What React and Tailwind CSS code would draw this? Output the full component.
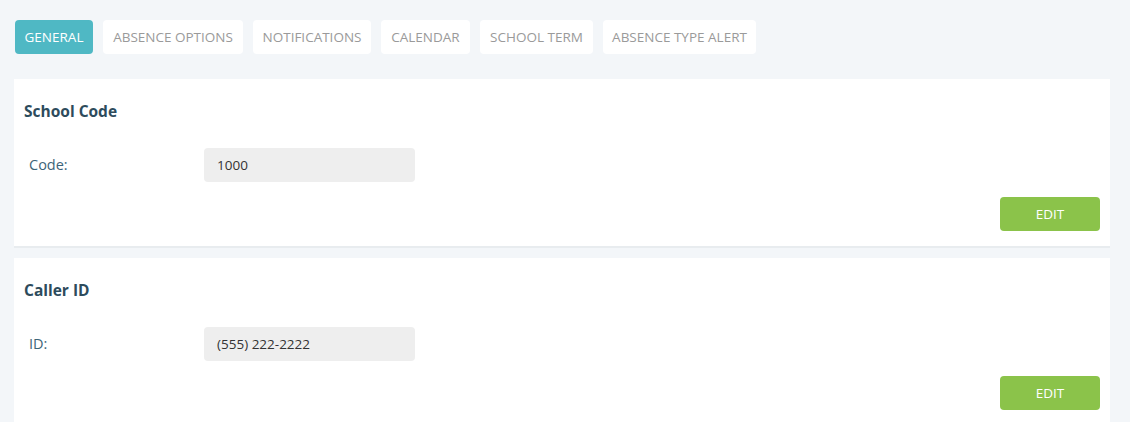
import React from "react";

const tabs = [
  { label: "GENERAL", w: "w-[78px]", active: true },
  { label: "ABSENCE OPTIONS", w: "w-[140px]" },
  { label: "NOTIFICATIONS", w: "w-[118px]" },
  { label: "CALENDAR", w: "w-[89px]" },
  { label: "SCHOOL TERM", w: "w-[113px]" },
  { label: "ABSENCE TYPE ALERT", w: "w-[153px]" },
];

function Card({ title, label, value }) {
  return (
    <div className="bg-white border-b-2 border-[#e8ecef] pt-[22px] pb-[15px] px-[10px]">
      <div className="text-[15.5px] leading-[20px] font-bold text-[#2d4b5c]">{title}</div>
      <div className="mt-[27px] flex items-center">
        <div className="w-[180px] pl-[5px] text-[14.5px] text-[#3d6478]">{label}</div>
        <div className="w-[211px] h-[34px] rounded-[4px] bg-[#eeeeee] flex items-center pl-[13px] pt-[1px] text-[13.5px] text-[#333]">
          {value}
        </div>
      </div>
      <div className="mt-[15px] flex justify-end">
        <button className="w-[100px] h-[34px] rounded-[4px] bg-[#8bc34a] text-white text-[13.5px] pt-[1px]">EDIT</button>
      </div>
    </div>
  );
}

export default function App() {
  return (
    <div
      className="min-h-screen bg-[#f3f6f9] pt-[20px] pl-[14px] pr-[20px]"
      style={{ fontFamily: "'Open Sans', 'Noto Sans', sans-serif" }}
    >
      <div className="flex gap-[10px] pl-[1px]">
        {tabs.map((t) => (
          <div
            key={t.label}
            className={
              "h-[34px] pt-[1px] rounded-[4px] flex items-center justify-center text-[13.5px] whitespace-nowrap " +
              t.w +
              (t.active ? " bg-[#4fb8c4] text-white" : " bg-white text-[#9a9a9a]")
            }
          >
            {t.label}
          </div>
        ))}
      </div>
      <div className="mt-[25px] flex flex-col gap-[10px] w-[1096px]">
        <Card title="School Code" label="Code:" value="1000" />
        <Card title="Caller ID" label="ID:" value="(555) 222-2222" />
      </div>
    </div>
  );
}
